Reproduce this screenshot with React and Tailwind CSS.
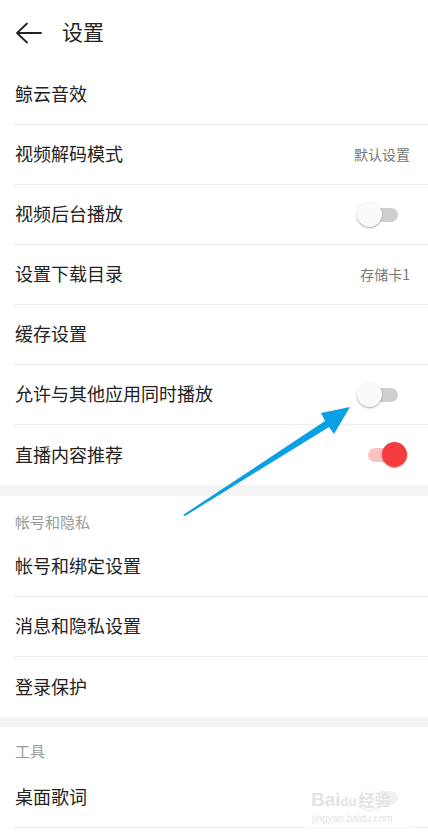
import React from "react";

const font = { fontFamily: '"Noto Sans CJK SC", "Noto Sans", sans-serif' };

function Toggle({ on }) {
  return (
    <div className="relative w-[50px] h-[26px] shrink-0">
      <div
        className={
          "absolute left-[11px] top-[6px] w-[30px] h-[14px] rounded-full " +
          (on ? "bg-[#fcc1c3]" : "bg-[#cfcfcf]")
        }
      />
      <div
        className={
          "absolute top-0 w-[25px] h-[25px] rounded-full shadow-[0_1px_2px_rgba(0,0,0,0.35)] " +
          (on ? "left-[25px] bg-[#f43c3e]" : "left-0 bg-[#fafafa]")
        }
      />
    </div>
  );
}

function Row({ label, right, toggle, divider = true }) {
  return (
    <div className="h-[60px] pl-[14px] bg-white">
      <div
        className={
          "h-full flex items-center justify-between " +
          (divider ? "border-b border-[#efefef]" : "")
        }
      >
        <span className="text-[18px] leading-[24px] text-[#222] pl-[1px] pb-[3px]">{label}</span>
        {right && (
          <span className="text-[14px] text-[#777] pr-[18px] pb-[1px]">{right}</span>
        )}
        {toggle !== undefined && (
          <div className="pr-[21px]">
            <Toggle on={toggle} />
          </div>
        )}
      </div>
    </div>
  );
}

function SectionHeader({ title, pt }) {
  return (
    <div className={"h-[41px] pl-[15px] bg-white " + pt}>
      <span className="text-[15px] leading-[20px] text-[#9a9a9a]">{title}</span>
    </div>
  );
}

export default function App() {
  return (
    <div className="relative w-[428px] h-[836px] bg-white overflow-hidden" style={font}>
      {/* Header */}
      <div className="h-[65px] flex items-center">
        <div className="w-[62px] pl-[15px] flex items-center">
          <svg width="28" height="22" viewBox="0 0 28 22" fill="none">
            <path
              d="M26 11H2M12 1.5L2 11l10 9.5"
              stroke="#222"
              strokeWidth="1.8"
              strokeLinecap="round"
              strokeLinejoin="round"
            />
          </svg>
        </div>
        <span className="text-[21px] leading-[28px] text-[#222] pb-[3px]">设置</span>
      </div>

      <Row label="鲸云音效" />
      <Row label="视频解码模式" right="默认设置" />
      <Row label="视频后台播放" toggle={false} />
      <Row label="设置下载目录" right="存储卡1" />
      <Row label="缓存设置" />
      <Row label="允许与其他应用同时播放" toggle={false} />
      <Row label="直播内容推荐" toggle={true} divider={false} />

      <div className="h-[11px] bg-[#f4f4f4]" />
      <SectionHeader title="帐号和隐私" pt="pt-[13px]" />
      <Row label="帐号和绑定设置" />
      <Row label="消息和隐私设置" />
      <Row label="登录保护" divider={false} />

      <div className="h-[10px] bg-[#f4f4f4]" />
      <SectionHeader title="工具" pt="pt-[11px]" />
      <Row label="桌面歌词" toggle={false} />

      {/* Annotation arrow */}
      <svg
        className="absolute left-0 top-0 pointer-events-none"
        width="428"
        height="836"
        viewBox="0 0 428 836"
      >
        <polygon
          points="183,515 325,421 321,413 350,407 334,434 329,427 185,516"
          fill="#0aa0e6"
        />
      </svg>

      {/* Watermark */}
      <div className="absolute left-[306px] top-[782px] w-[104px] h-[46px] pointer-events-none">
        <div className="absolute inset-0 bg-white/70" />
        <div
          className="absolute left-[5px] top-[8px] text-[19px] leading-[20px] font-bold text-[#e4e4e4]"
          style={{ fontFamily: '"Liberation Sans", "Noto Sans CJK SC", sans-serif' }}
        >
          Bai<span className="text-[13px]">du</span>
          <span className="text-[16px] ml-[2px]">经验</span>
        </div>
        <div
          className="absolute left-[6px] top-[31px] text-[10px] leading-[12px] text-[#e6e6e6]"
          style={{ fontFamily: '"Liberation Sans", sans-serif' }}
        >
          jingyan.baidu.com
        </div>
      </div>
    </div>
  );
}
